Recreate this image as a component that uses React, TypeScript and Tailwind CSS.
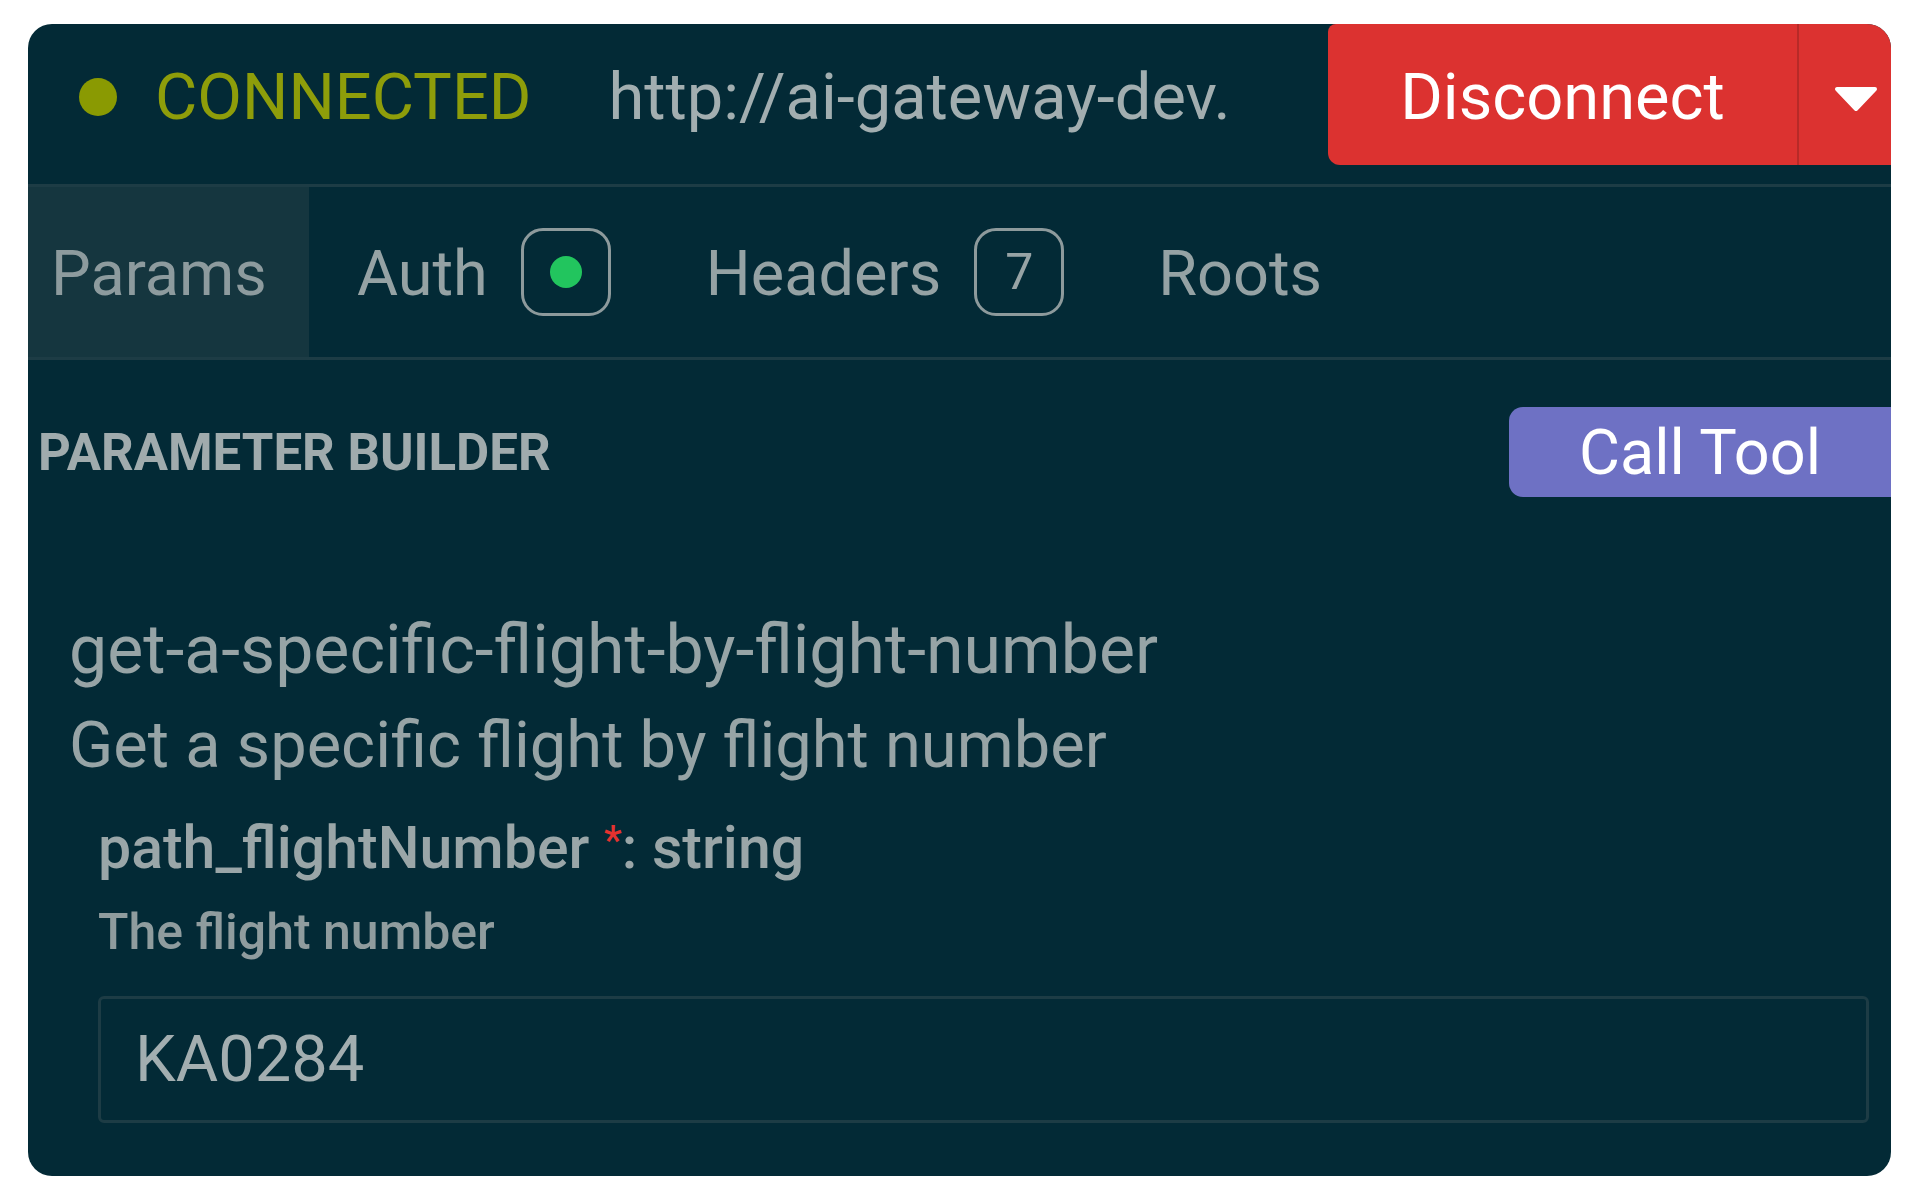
import React from "react";

const font = { fontFamily: "Roboto, 'Noto Sans', sans-serif" };

function CountBadge({ children }: { children: React.ReactNode }) {
    return (
        <span className="flex h-[88px] w-[90px] items-center justify-center rounded-[22px] border-[3px] border-[#8d9a9c] text-[50px] leading-none text-[#97a3a5]">
            {children}
        </span>
    );
}

export default function App() {
    return (
        <div className="min-h-screen bg-white pt-[24px] pl-[28px]" style={font}>
            <div className="flex h-[1152px] w-[1863px] flex-col overflow-hidden rounded-[24px] bg-[#032a36]">
                {/* Connection header */}
                <div className="flex h-[163px] items-start border-b-[3px] border-[#1d3c45]">
                    <div className="flex h-[141px] w-full items-center">
                        <span className="ml-[51px] mt-[4px] h-[38px] w-[38px] rounded-full bg-[#8a9a02]" />
                        <span className="ml-[38px] mt-[6px] text-[65px] leading-none text-[#8e9d0a]">CONNECTED</span>
                        <span className="ml-[77px] mt-[6px] text-[65px] leading-none text-[#a2aeb0]">
                            http://ai-gateway-dev.
                        </span>
                        <div className="ml-auto flex h-full overflow-hidden rounded-bl-[12px] rounded-tl-[8px] bg-[#dc3230]">
                            <button className="flex w-[469px] items-center justify-center pt-[5px] text-[65px] leading-none text-white">
                                Disconnect
                            </button>
                            <span className="w-[2px] bg-[#b72a28]" />
                            <button className="flex w-[92px] items-center justify-center pl-[22px] pt-[8px]">
                                <svg width="44" height="26" viewBox="0 0 44 26">
                                    <path
                                        d="M3 3 L41 3 L22 23 Z"
                                        fill="#fff"
                                        stroke="#fff"
                                        strokeWidth="4"
                                        strokeLinejoin="round"
                                    />
                                </svg>
                            </button>
                        </div>
                    </div>
                </div>

                {/* Tabs */}
                <div className="flex h-[173px] items-stretch border-b-[3px] border-[#1d3c45] text-[63px] leading-none text-[#95a2a4]">
                    <div className="flex w-[281px] items-center bg-[#15363f] pl-[23px] pt-[3px] text-[#8d9b9e]">Params</div>
                    <div className="flex items-center gap-[33px] px-[48px]">
                        <span className="pt-[3px]">Auth</span>
                        <CountBadge>
                            <span className="h-[32px] w-[32px] rounded-full bg-[#22c55e]" />
                        </CountBadge>
                    </div>
                    <div className="flex items-center gap-[33px] px-[47px]">
                        <span className="pt-[3px]">Headers</span>
                        <CountBadge>7</CountBadge>
                    </div>
                    <div className="flex items-center px-[47px] pt-[3px]">Roots</div>
                </div>

                {/* Parameter builder */}
                <div className="flex flex-col">
                    <div className="mt-[47px] flex h-[90px] items-center justify-between pl-[10px]">
                        <h2 className="text-[51px] font-bold leading-none text-[#a0abad]">PARAMETER BUILDER</h2>
                        <button className="flex h-[90px] w-[382px] items-center justify-center rounded-l-[14px] bg-[#6e71c4] text-[63px] leading-none text-white">
                            Call Tool
                        </button>
                    </div>

                    <div className="mt-[115px] pl-[41px] text-[#97a4a6]">
                        <p className="text-[68px] leading-[76px]">get-a-specific-flight-by-flight-number</p>
                        <p className="mt-[19px] text-[65px] leading-[76px]">Get a specific flight by flight number</p>
                    </div>

                    <div className="pl-[70px] pr-[22px]">
                        <p className="mt-[30px] h-[70px] text-[59px] font-medium leading-[70px] text-[#9aa6a8]">
                            path_flightNumber{" "}
                            <span className="relative top-[-14px] text-[40px] leading-none text-[#e5322f]">*</span>: string
                        </p>
                        <p className="mt-[19px] text-[50px] font-medium leading-[60px] text-[#8f9c9e]">The flight number</p>
                        <div className="mt-[34px] flex h-[127px] items-center rounded-[6px] border-[3px] border-[#1d3c45] pl-[34px]">
                            <span className="text-[65px] leading-none text-[#a3aeb0]">KA0284</span>
                        </div>
                    </div>
                </div>
            </div>
        </div>
    );
}
